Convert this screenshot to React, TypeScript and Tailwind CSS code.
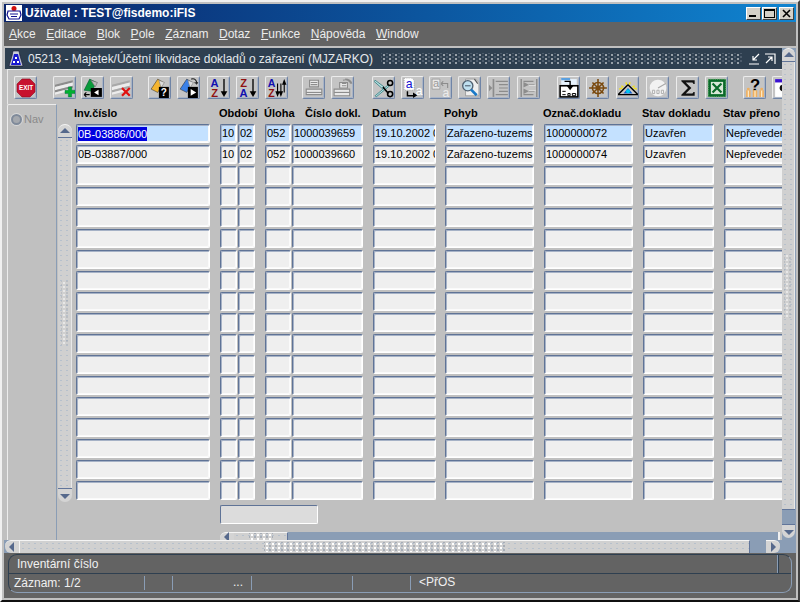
import { ReactNode } from "react"

const font = "font-['Liberation_Sans',Arial,sans-serif]"

// field columns, left to right
const cols = [
  "w-[134px]",
  "w-[17px] ml-[10px]",
  "w-[17px] ml-[1px]",
  "w-[26px] ml-[10px]",
  "w-[71px] ml-[1px]",
  "w-[63px] ml-[10px]",
  "w-[89px] ml-[9px]",
  "w-[89px] ml-[10px]",
  "w-[71px] ml-[10px]",
  "w-[70px] ml-[10px]",
]

const headers = [
  { label: "Inv.číslo", w: "w-[145px]" },
  { label: "Období", w: "w-[45px]" },
  { label: "Úloha", w: "w-[41px]" },
  { label: "Číslo dokl.", w: "w-[67px]" },
  { label: "Datum", w: "w-[72px]" },
  { label: "Pohyb", w: "w-[99px]" },
  { label: "Označ.dokladu", w: "w-[99px]" },
  { label: "Stav dokladu", w: "w-[81px]" },
  { label: "Stav přeno", w: "w-[70px]" },
]

const filled = [
  ["0B-03886/000", "10", "02", "052", "1000039659", "19.10.2002 0", "Zařazeno-tuzems", "1000000072", "Uzavřen", "Nepřevedeno"],
  ["0B-03887/000", "10", "02", "052", "1000039660", "19.10.2002 0", "Zařazeno-tuzems", "1000000074", "Uzavřen", "Nepřevedeno"],
]

const menu = ["Akce", "Editace", "Blok", "Pole", "Záznam", "Dotaz", "Funkce", "Nápověda", "Window"]

const svgText = { fontFamily: "Liberation Sans, Arial, sans-serif", fontWeight: 700 }
const svgThin = { fontFamily: "Liberation Sans, Arial, sans-serif" }

function Svg({ children }: { children: ReactNode }) {
  return (
    <svg viewBox="0 0 18 18" className="w-[20px] h-[20px] shrink-0">
      {children}
    </svg>
  )
}

function Bands({ on = true }: { on?: boolean }) {
  return (
    <>
      <path d="M0 6 16 2v2L0 8z" fill={on ? "#8c8c8c" : "#a8a8a8"} />
      <path d="M0 8 16 4v3L0 11z" fill="#ececec" />
      <path d="M0 11 16 7v2L0 13z" fill={on ? "#8c8c8c" : "#a8a8a8"} />
      <path d="M0 13 12 10v2L0 15z" fill="#ececec" />
    </>
  )
}

function Sheet({ fill }: { fill: string }) {
  return (
    <>
      <path d="M1 10 7 1l5 3-5 9z" fill={fill} stroke="#333" strokeWidth=".5" />
      <path d="M8 2l5 2-3 5z" fill="#ddd" stroke="#777" strokeWidth=".5" />
    </>
  )
}

const icons: { icon: ReactNode; ml: string }[] = [
  {
    ml: "ml-[6px]",
    icon: (
      <svg viewBox="0 0 20 20" className="w-[20px] h-[20px]">
        <path d="M6 1h8l5 5v8l-5 5H6l-5-5V6z" fill="#c8102e" stroke="#8a0a1e" strokeWidth=".6" />
        <text x="10" y="12.2" fontSize="6.4" textAnchor="middle" fill="#fff" style={svgText}>EXIT</text>
      </svg>
    ),
  },
  {
    ml: "ml-[16px]",
    icon: (
      <Svg>
        <Bands />
        <path d="M12 8h3v3h3v3h-3v3h-3v-3H9v-3h3z" fill="#00b030" stroke="#064" strokeWidth=".4" />
      </Svg>
    ),
  },
  {
    ml: "ml-[5px]",
    icon: (
      <Svg>
        <path d="M1 11 6 1l6 3-4 8z" fill="#0a9a3a" stroke="#053" strokeWidth=".5" />
        <path d="M7 2l6 2-2 4z" fill="#bbb" stroke="#666" strokeWidth=".5" />
        <rect x="7" y="9" width="10" height="8" fill="#000" />
        <path d="M14 10.5v5l-4-2.5z" fill="#fff" />
        <path d="M1 15h5M1 15l2-2M1 15l2 2" stroke="#000" fill="none" />
      </Svg>
    ),
  },
  {
    ml: "ml-[6px]",
    icon: (
      <Svg>
        <Bands on={false} />
        <path d="M9 9l7 7m0-7-7 7" stroke="#e01010" strokeWidth="2" />
      </Svg>
    ),
  },
  {
    ml: "ml-[15px]",
    icon: (
      <Svg>
        <Sheet fill="#f5b530" />
        <rect x="8" y="8" width="9" height="10" fill="#000" />
        <text x="12.5" y="16.5" fontSize="9" textAnchor="middle" fill="#fff" style={svgText}>?</text>
      </Svg>
    ),
  },
  {
    ml: "ml-[6px]",
    icon: (
      <Svg>
        <Sheet fill="#3a80e8" />
        <rect x="8" y="8" width="9" height="10" fill="#000" />
        <path d="M10.5 10v6l5-3z" fill="#fff" />
        <path d="M11 1c3-1 5 1 5 4l1-1m-1 1-2-1" stroke="#222" fill="none" />
      </Svg>
    ),
  },
  {
    ml: "ml-[7px]",
    icon: (
      <Svg>
        <text x="5" y="8" fontSize="10" textAnchor="middle" fill="#1010b0" style={svgText}>A</text>
        <text x="5" y="17" fontSize="10" textAnchor="middle" fill="#901010" style={svgText}>Z</text>
        <path d="M13.5 1v12" stroke="#000" strokeWidth="1.2" />
        <path d="M10.500 12h6l-3 5z" fill="#000" />
      </Svg>
    ),
  },
  {
    ml: "ml-[6px]",
    icon: (
      <Svg>
        <text x="5" y="8" fontSize="10" textAnchor="middle" fill="#901010" style={svgText}>Z</text>
        <text x="5" y="17" fontSize="10" textAnchor="middle" fill="#1010b0" style={svgText}>A</text>
        <path d="M13.5 1v12" stroke="#000" strokeWidth="1.2" />
        <path d="M10.500 12h6l-3 5z" fill="#000" />
      </Svg>
    ),
  },
  {
    ml: "ml-[6px]",
    icon: (
      <Svg>
        <text x="4" y="8" fontSize="9.500" textAnchor="middle" fill="#1010b0" style={svgText}>A</text>
        <text x="4" y="17" fontSize="9.500" textAnchor="middle" fill="#901010" style={svgText}>Z</text>
        <path d="M9.500 5v8M12.500 5v8M15.500 5v8" stroke="#000" />
        <path d="M7.500 12h4l-2 5zM10.500 12h4l-2 5z" fill="#000" />
        <path d="M13.500 6h4l-2-5z" fill="#000" />
      </Svg>
    ),
  },
  {
    ml: "ml-[14px]",
    icon: (
      <Svg>
        <path d="M5 2h8v6H5z" fill="#e8e8e8" stroke="#8c8c8c" />
        <path d="M6 4h6M6 6h6" stroke="#8c8c8c" />
        <path d="M2 10h14v5H2z" fill="#e8e8e8" stroke="#8c8c8c" />
        <path d="M2 13h14" stroke="#8c8c8c" />
      </Svg>
    ),
  },
  {
    ml: "ml-[6px]",
    icon: (
      <Svg>
        <path d="M6 4h7v5H6z" fill="#e8e8e8" stroke="#8c8c8c" />
        <path d="M9 2c3-1 6 0 7 3M11 1c2 0 5 1 6 4M8 5h4M8 7h4" stroke="#8c8c8c" fill="none" />
        <path d="M1 10h14v6H1z" fill="#e8e8e8" stroke="#8c8c8c" />
        <path d="M1 13h14" stroke="#8c8c8c" />
      </Svg>
    ),
  },
  {
    ml: "ml-[18px]",
    icon: (
      <Svg>
        <path d="M1 2 9 8l-1 2L0 3z" fill="#b8e0e0" stroke="#2a7a80" strokeWidth=".7" />
        <path d="M1 16 13 6l1 1L2 17z" fill="#b8e0e0" stroke="#2a7a80" strokeWidth=".7" />
        <path d="M8 8 13 14" stroke="#000" strokeWidth="1.4" />
        <circle cx="14.500" cy="4.500" r="2.300" fill="none" stroke="#000" strokeWidth="1.400" />
        <circle cx="14.500" cy="14.500" r="2.300" fill="none" stroke="#000" strokeWidth="1.400" />
      </Svg>
    ),
  },
  {
    ml: "ml-[6px]",
    icon: (
      <Svg>
        <path d="M1 0h7l2 2v9H1z" fill="#fff" stroke="#777" strokeWidth=".5" strokeDasharray="1 1" />
        <text x="5.500" y="9" fontSize="11" textAnchor="middle" fill="#1010d0" style={svgThin}>a</text>
        <path d="M4 12v4h6" stroke="#000" strokeWidth="1.300" fill="none" />
        <path d="M9 13v5l4-2.500z" fill="#000" />
        <text x="14.500" y="15" fontSize="11" textAnchor="middle" fill="#fff" style={svgThin}>a</text>
      </Svg>
    ),
  },
  {
    ml: "ml-[5px]",
    icon: (
      <Svg>
        <path d="M1 1h7v9H1z" fill="#e8e8e8" stroke="#8c8c8c" strokeWidth=".6" />
        <text x="4.500" y="8.500" fontSize="10" textAnchor="middle" fill="#999" style={svgThin}>a</text>
        <path d="M9 5h6v4M9 5l2-2M9 5l2 2" stroke="#8c8c8c" fill="none" />
        <text x="13.500" y="17" fontSize="11" textAnchor="middle" fill="#ececec" style={svgThin}>a</text>
      </Svg>
    ),
  },
  {
    ml: "ml-[6px]",
    icon: (
      <Svg>
        <path d="M5 1h9l3 3v12H5z" fill="#efefef" stroke="#888" strokeWidth=".6" />
        <path d="M13 1l3 4" stroke="#555" />
        <circle cx="7" cy="7" r="4.600" fill="#bfe0f0" stroke="#506070" strokeWidth="1.200" />
        <path d="M4.500 7h5" stroke="#506070" />
        <path d="M10 10.500l5 5" stroke="#1878c8" strokeWidth="2.400" />
      </Svg>
    ),
  },
  {
    ml: "ml-[6px]",
    icon: (
      <Svg>
        <path d="M4 1v16" stroke="#8c8c8c" strokeWidth="1.500" />
        <path d="M6 3h11M9 6h8M9 9h8M9 12h8M6 15h11" stroke="#8c8c8c" />
        <path d="M0 6v6l3-3z" fill="#8c8c8c" />
      </Svg>
    ),
  },
  {
    ml: "ml-[7px]",
    icon: (
      <Svg>
        <path d="M2 1v16M16 1v16" stroke="#8c8c8c" strokeWidth="1.300" />
        <path d="M4 3h9M4 15h9M9 6h5M9 12h5" stroke="#8c8c8c" />
        <path d="M4 3.500v5l5-2.500zM4 9.500v5l5-2.500z" fill="#8c8c8c" />
        <path d="M9 6.500h6M9 11.500h6" stroke="#e8e8e8" />
      </Svg>
    ),
  },
  {
    ml: "ml-[17px]",
    icon: (
      <Svg>
        <rect x="2" y="1" width="14" height="5" fill="#e8f4ff" />
        <path d="M2 1h8" stroke="#5aa0e0" strokeWidth="2" />
        <rect x="1" y="7" width="16" height="10" fill="#fff" stroke="#000" strokeWidth="1.400" />
        <path d="M5 3h5v5" stroke="#000" strokeWidth="1.200" fill="none" />
        <path d="M7 7h6l-3 4z" fill="#000" />
        <path d="M3 12h3M3 15h3M8 14h2v2H8zM12 14h3v2h-3z" stroke="#000" fill="none" strokeWidth=".9" />
      </Svg>
    ),
  },
  {
    ml: "ml-[6px]",
    icon: (
      <Svg>
        <g stroke="#7a4a10" fill="none" strokeWidth="1.400">
          <circle cx="9" cy="9" r="5" />
          <circle cx="9" cy="9" r="1.500" />
          <path d="M9 1v16M1 9h16M4 4l10 10M14 4 4 14" />
        </g>
      </Svg>
    ),
  },
  {
    ml: "ml-[7px]",
    icon: (
      <Svg>
        <path d="M0 15 9 6l9 9z" fill="#c8c8c8" stroke="#000" strokeWidth="1.200" />
        <path d="M5 14 9 9l4 5z" fill="#1060d0" />
        <circle cx="9" cy="12" r="1.800" fill="#00c8f0" />
        <path d="M1 10l3-1M3 7l2 1M17 10l-3-1M15 7l-2 1M7 4l1 2M11 4l-1 2" stroke="#f0e020" strokeWidth="1.300" />
      </Svg>
    ),
  },
  {
    ml: "ml-[7px]",
    icon: (
      <Svg>
        <circle cx="9" cy="9" r="7.500" fill="#f2f2f2" />
        <path d="M9 9l7-4" stroke="#a8a8a8" />
        <path d="M4 11h2v3H4zM8 11h2v3H8zM12 11h2v3h-2z" fill="none" stroke="#a8a8a8" strokeWidth=".8" />
      </Svg>
    ),
  },
  {
    ml: "ml-[7px]",
    icon: (
      <Svg>
        <path d="M3 2h12v3.500h-1L13 4H7l5 5-5 5h6l1-1.500h1V16H3v-1l6-6-6-6z" fill="#111" />
      </Svg>
    ),
  },
  {
    ml: "ml-[6px]",
    icon: (
      <Svg>
        <rect x="1" y="1" width="16" height="16" fill="#0a6a2a" />
        <rect x="3.500" y="3.500" width="11" height="11" fill="#d8e8d8" />
        <path d="M5 5l8 8M13 5l-8 8" stroke="#0a6a2a" strokeWidth="2" />
        <path d="M1 1h16v16H1z" fill="none" stroke="#7ac07a" strokeWidth=".8" strokeDasharray="1 1" />
      </Svg>
    ),
  },
  {
    ml: "ml-[15px]",
    icon: (
      <Svg>
        <text x="9" y="11.500" fontSize="15" textAnchor="middle" fill="#000" style={svgText}>?</text>
        <path d="M1 11h4v6H1zM7 11h4v6H7zM13 11h4v6h-4z" fill="#f0b060" />
        <path d="M3 11v6M9 11v6M15 11v6" stroke="#fff0d0" />
        <circle cx="3" cy="10" r="1.300" fill="#f0b060" />
        <circle cx="15" cy="10" r="1.300" fill="#f0b060" />
      </Svg>
    ),
  },
  {
    ml: "ml-[6px]",
    icon: (
      <Svg>
        <rect x="1" y="1" width="16" height="16" fill="#fff" />
        <rect x="1" y="1" width="16" height="3" fill="#3a10d0" />
        <circle cx="8" cy="9" r="3" fill="#111" />
      </Svg>
    ),
  },
]

function ToolButton({ children, ml }: { children: ReactNode; ml: string }) {
  return (
    <div className={`${ml} shrink-0 w-[23px] h-[23px] flex items-center justify-center rounded-[2px] bg-[#c4c4c4] border border-t-[#ececec] border-l-[#ececec] border-r-[#6f84a6] border-b-[#6f84a6] shadow-[inset_-1px_-1px_0_#a9b4c6]`}>
      {children}
    </div>
  )
}

function Field({ className, value, active, selected }: { className: string; value?: string; active?: boolean; selected?: boolean }) {
  return (
    <div className={`${className} shrink-0 h-[19px] flex items-center overflow-hidden rounded-[2px] border border-t-[#5f7396] border-l-[#5f7396] border-r-white border-b-white shadow-[inset_1px_1px_0_#a6b2c6,inset_-1px_-1px_0_#fafafa] pl-[1px] text-[11px] leading-none text-black whitespace-nowrap ${active ? "bg-[#c4e1ff]" : "bg-[#efefef]"}`}>
      {selected ? <span className="bg-[#0000e0] text-white leading-[14px]">{value}</span> : value}
    </div>
  )
}

function Dots({ className }: { className: string }) {
  return (
    <div className={`${className} bg-[radial-gradient(circle,#ffffff_0.8px,transparent_1px),radial-gradient(circle,#8f99a8_0.6px,transparent_0.9px)] bg-[size:6px_4px] bg-[position:0_0,3px_2px]`} />
  )
}

const thumb = "bg-[#d0d0d0] bg-[radial-gradient(circle,#b6c0cc_0.6px,transparent_0.8px)] bg-[size:6px_5px]"
const capCls = "shrink-0 bg-[#d4d4d4] flex items-center justify-center"

function Triangle({ dir }: { dir: "up" | "down" | "left" | "right" }) {
  const d = { up: "M0 7 5 2l5 5z", down: "M0 3h10L5 8z", left: "M7 0v10L2 5z", right: "M3 0v10l5-5z" }[dir]
  return (
    <svg viewBox="0 0 10 10" className="w-[10px] h-[10px]">
      <path d={d} fill="#56698c" />
    </svg>
  )
}

function VScroll({ className, fill }: { className: string; fill?: boolean }) {
  return (
    <div className={`${className} flex flex-col shrink-0`}>
      <div className={`${capCls} h-[14px] rounded-t-[7px] border-t border-[#f4f4f4] border-b-[#61759a] border-b`}>
        <Triangle dir="up" />
      </div>
      <div className={`${thumb} flex-1 flex items-center justify-center border-r border-[#e8e8e8]`}>
        <Dots className="w-[8px] h-[64px] opacity-50" />
      </div>
      {fill && <div className="h-[15px] shrink-0 bg-[#8a9db5] border-t border-[#61759a]" />}
      <div className={`${capCls} h-[14px] rounded-b-[7px] border-t border-[#61759a]`}>
        <Triangle dir="down" />
      </div>
    </div>
  )
}

export default function App() {
  return (
    <div className={`${font} w-[800px] h-[602px] overflow-hidden flex flex-col bg-[#c0c0c0] border-t-[2px] border-l-[2px] border-r-[2px] border-b-[2px] border-t-[#f0f0f0] border-l-[#f0f0f0] border-r-[#404040] border-b-[#101010] p-[2px]`}>
      {/* window title */}
      <div className="h-[18px] shrink-0 flex items-center bg-gradient-to-r from-[#0a246a] to-[#1084d0] pl-[2px] pr-[2px]">
        <svg viewBox="0 0 16 16" className="w-[16px] h-[16px] shrink-0">
          <rect width="16" height="16" fill="#fff" />
          <circle cx="8" cy="3.500" r="2.500" fill="#d01010" />
          <path d="M2 6h12l1 4-2 4H3l-2-4z" fill="none" stroke="#101090" strokeWidth="1.200" />
          <path d="M4 9h8M5 11.500h6" stroke="#101090" />
        </svg>
        <span className="ml-[3px] text-[12px] font-bold text-white leading-none">Uživatel : TEST@fisdemo:iFIS</span>
        <div className="ml-auto flex gap-[1px]">
          {["min", "max", "close"].map(k => (
            <div key={k} className={`${k === "close" ? "ml-[1px]" : ""} w-[15px] h-[13px] bg-[#d4d0c8] border border-t-white border-l-white border-r-[#404040] border-b-[#404040] flex items-center justify-center`}>
              {k === "min" && <div className="w-[7px] h-[2px] bg-black mt-[6px] mr-[2px]" />}
              {k === "max" && <div className="w-[11px] h-[9px] border border-black border-t-2" />}
              {k === "close" && (
                <svg viewBox="0 0 9 9" className="w-[9px] h-[9px]">
                  <path d="M1 1l7 7m0-7-7 7" stroke="#000" strokeWidth="1.600" />
                </svg>
              )}
            </div>
          ))}
        </div>
      </div>

      {/* menu */}
      <div className="h-[24px] shrink-0 flex items-center gap-[10.5px] bg-[#636363] pl-[5px] text-[12px] text-[#ececec]">
        {menu.map(m => (
          <span key={m}>
            <span className="underline">{m[0]}</span>
            {m.slice(1)}
          </span>
        ))}
      </div>

      <div className="h-[2px] shrink-0" />

      {/* form window */}
      <div className="h-[492px] shrink-0 flex">
        <div className="w-[777px] ml-[1px] shrink-0 flex flex-col">
          {/* form title */}
          <div className="h-[21px] shrink-0 flex items-center bg-[#2e3f50] text-[12px] text-[#e4e8ec] pl-[3px]">
            <svg viewBox="0 0 16 18" className="w-[16px] h-[18px] shrink-0">
              <path d="M5 1h6l1 5 3 10H1L4 6z" fill="#c8ccd8" stroke="#101030" strokeWidth=".6" />
              <path d="M6 4h4l1 4 2 7H3l2-7z" fill="#1818d0" />
              <path d="M7 7h2v2H7zM5 11h2v2H5zM9 11h2v2H9z" fill="#fff" />
            </svg>
            <span className="ml-[4px] whitespace-nowrap tracking-[-0.03px]">05213 - Majetek/Účetní likvidace dokladů o zařazení (MJZARKO)</span>
            <Dots className="ml-[8px] flex-1 h-[11px] opacity-50" />
            <div className="ml-[5px] mr-[6px] flex gap-[4px]">
              <svg viewBox="0 0 12 12" className="w-[12px] h-[12px]">
                <path d="M11 1 5 7M5 3v4h4M1 11h10" stroke="#fff" strokeWidth="1.200" fill="none" />
              </svg>
              <svg viewBox="0 0 12 12" className="w-[12px] h-[12px]">
                <path d="M1 1h10v10M2 10l6-6M4 4h4v4" stroke="#fff" strokeWidth="1.200" fill="none" />
              </svg>
            </div>
          </div>

          {/* toolbar */}
          <div className="h-[35px] shrink-0 ml-[2px] flex items-start pt-[6px] overflow-hidden border-t border-l border-[#e8e8e8]">
            {icons.map((b, i) => (
              <ToolButton key={i} ml={b.ml}>
                {b.icon}
              </ToolButton>
            ))}
          </div>

          {/* body */}
          <div className="flex-1 flex min-h-0">
            <div className="w-[50px] ml-[2px] shrink-0 rounded-tl-[2px] border-t border-l border-r border-t-[#ececec] border-l-[#ececec] border-r-[#8a9db5] flex items-start pt-[8px] pl-[3px]">
              <div className="w-[11px] h-[11px] rounded-full bg-[#a4a8ae] border-2 border-[#7f8a9a] shadow-[0_0_0_1px_#d8d8d8] shrink-0 mt-[1px]" />
              <span className="ml-[2px] text-[11px] text-[#8a8a8a] leading-[13px]">Nav</span>
            </div>

            <div className="flex-1 min-w-0 flex flex-col overflow-hidden">
              {/* header */}
              <div className="h-[20px] shrink-0 flex items-center pb-[2px] pl-[17px] text-[11px] font-bold text-black leading-none whitespace-nowrap">
                {headers.map(h => (
                  <span key={h.label} className={`${h.w} shrink-0`}>
                    {h.label}
                  </span>
                ))}
              </div>

              <div className="flex shrink-0">
                <VScroll className="w-[14px] ml-[1px] h-[378px]" />
                <div className="ml-[4px] flex flex-col gap-[2px] shrink-0">
                  {Array.from({ length: 18 }).map((_, r) => (
                    <div key={r} className="flex">
                      {cols.map((c, i) => (
                        <Field key={i} className={c} value={filled[r]?.[i]} active={r === 0} selected={r === 0 && i === 0} />
                      ))}
                    </div>
                  ))}
                </div>
              </div>

              <div className="ml-[163px] mt-[3px] w-[98px] h-[19px] shrink-0 rounded-[2px] border border-t-[#5f7396] border-l-[#5f7396] border-r-white border-b-white bg-[#dcdcdc]" />

              {/* block scrollbar */}
              <div className="mt-[8px] ml-[163px] flex-1 flex min-h-0 overflow-hidden">
                <div className={`${capCls} w-[14px] rounded-tl-[6px] border-t border-[#f4f4f4]`}>
                  <Triangle dir="left" />
                </div>
                <div className={`${thumb} w-[54px] shrink-0 border-t border-[#f4f4f4] flex justify-center border-r border-r-[#61759a]`}>
                  <Dots className="w-[24px] h-[8px]" />
                </div>
                <div className="flex-1 bg-[#8a9db5]" />
                <div className="w-[2px] bg-[#f0f0f0] mr-[2px] shrink-0" />
              </div>
            </div>
          </div>
        </div>

        {/* form vertical scrollbar */}
        <div className="w-[14px] shrink-0 bg-[#8a9db5]">
          <VScroll className="w-[13px] h-[490px]" fill />
        </div>
      </div>

      {/* form horizontal scrollbar */}
      <div className="h-[13px] shrink-0 flex bg-[#8a9db5] pl-[1px]">
        <div className={`${capCls} w-[14px] rounded-l-[6px] border-t border-[#f4f4f4]`}>
          <Triangle dir="left" />
        </div>
        <div className={`${thumb} w-[731px] shrink-0 flex items-center justify-center border-t border-l border-[#f4f4f4] border-r-[#61759a] border-r`}>
          <Dots className="w-[242px] h-[10px]" />
        </div>
        <div className="w-[16px] shrink-0" />
        <div className={`${capCls} w-[14px] rounded-r-[6px] border-t border-[#f4f4f4]`}>
          <Triangle dir="right" />
        </div>
      </div>

      {/* status */}
      <div className="h-[45px] shrink-0 bg-[#636363] text-[12px] text-[#f0f0f0] pt-[1px] px-[4px]">
        <div className="h-[39px] rounded-[9px] border border-l-[#2e3f50] border-t-[#2e3f50] border-r-[#8a9db5] border-b-[#8a9db5] flex flex-col">
          <div className="h-[19px] shrink-0 flex items-center border-b border-[#2e3f50] pl-[8px]">
            <span>Inventární číslo</span>
            <div className="ml-auto mr-[12px] w-[2px] h-full border-l border-r border-l-[#8a9db5] border-r-[#2e3f50]" />
          </div>
          <div className="flex-1 flex items-center leading-none">
            <span className="w-[135px] pl-[5px] shrink-0">Záznam: 1/2</span>
            <div className="w-[28px] h-[14px] shrink-0 border-l border-[#8a9db5]" />
            <div className="w-[79px] h-[14px] shrink-0 border-l border-[#8a9db5] text-right pr-[8px]">...</div>
            <div className="w-[101px] h-[14px] shrink-0 border-l border-[#8a9db5]" />
            <div className="w-[58px] h-[14px] shrink-0 border-l border-[#8a9db5]" />
            <div className="h-[14px] shrink-0 border-l border-[#8a9db5] pl-[8px]">&lt;PřOS</div>
          </div>
        </div>
      </div>
    </div>
  )
}
